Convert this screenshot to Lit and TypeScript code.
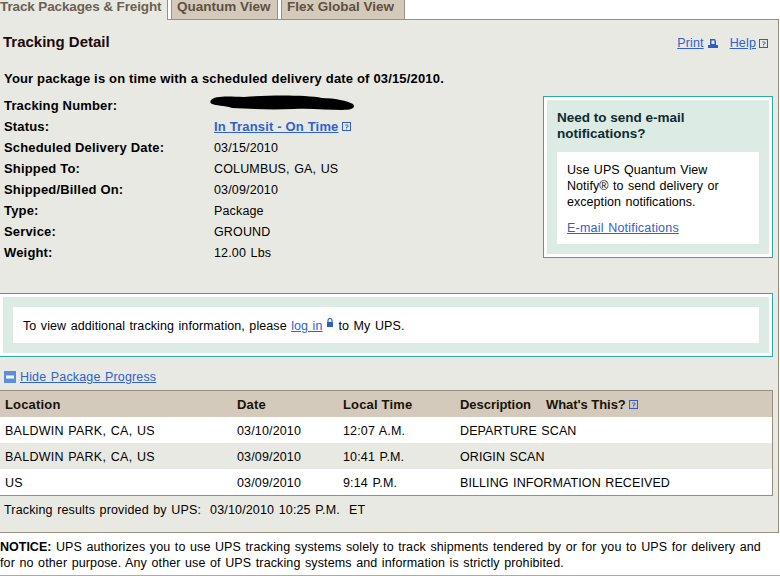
import { LitElement, html, css, svg } from "lit";
import { customElement } from "lit/decorators.js";

const qIcon = html`<svg class="qi" width="9" height="9" viewBox="0 0 9 9"><rect x=".5" y=".5" width="8" height="8" fill="none" stroke="#2f5fc4"/><path d="M3 3h3v2H4.500v1M4.500 6.500v1" fill="none" stroke="#2f5fc4" stroke-width=".8"/></svg>`;
const details: [string, unknown][] = [
  ["Status:", html`<a class="status" href="#">In Transit - On Time</a><span class="after">${qIcon}</span>`],
  ["Scheduled Delivery Date:", "03/15/2010"],
  ["Shipped To:", "COLUMBUS, GA, US"],
  ["Shipped/Billed On:", "03/09/2010"],
  ["Type:", "Package"],
  ["Service:", "GROUND"],
  ["Weight:", "12.00 Lbs"],
];
const rows = [
  ["BALDWIN PARK, CA, US", "03/10/2010", "12:07 A.M.", "DEPARTURE SCAN"],
  ["BALDWIN PARK, CA, US", "03/09/2010", "10:41 P.M.", "ORIGIN SCAN"],
  ["US", "03/09/2010", "9:14 P.M.", "BILLING INFORMATION RECEIVED"],
];

@customElement("app-root")
export class AppRoot extends LitElement {
  static styles = css`
    :host { display: block; width: 780px; height: 576px; overflow: hidden; background: #fff; color: #000;
      font: 12.500px/16px "Liberation Sans", Arial, sans-serif; letter-spacing: .15px; word-spacing: .9px; }
    a { color: #2f62cc; text-decoration: underline; }
    b { font-size: 13px; letter-spacing: .17px; word-spacing: 0; }
    .tabs { display: flex; height: 19px; }
    .tab { box-sizing: border-box; height: 20px; margin-bottom: -1px; font: bold 13.500px/13px "Liberation Sans", Arial, sans-serif; letter-spacing: 0; word-spacing: 0; color: #5f5040; position: relative; white-space: nowrap; }
    .tab.on { width: 168px; background: #e9e9e3; border-right: 1px solid #9a8f7f; color: #6b6054; z-index: 1; letter-spacing: -.12px; }
    .tab.off { background: #d3cabc; border: solid #9a8f7f; border-width: 0 1px 1px 1px; padding-left: 5px; }
    .t2 { width: 107px; margin-left: 3px; }
    .t3 { width: 124px; margin-left: 3px; }
    .panel { box-sizing: border-box; width: 779px; height: 514px; background: #e9e9e3; border: solid #9a8f7f; border-width: 1px 1px 1px 0; display: flex; flex-direction: column; }
    .head { display: flex; justify-content: space-between; padding: 14px 10px 0 3px; height: 32px; box-sizing: border-box; }
    h1 { margin: 0; font: bold 15px/16px "Liberation Sans", Arial, sans-serif; letter-spacing: 0; word-spacing: 0; color: #1d0a0a; }
    .tools { display: flex; align-items: center; height: 16px; margin-top: 1px; }
    .tools a { margin-right: 3px; }
    .tools a.pr { margin-right: 4px; }
    .tools svg { margin-right: 12px; }
    .tools svg:last-child { margin-right: 0; }
    .ontime { font-weight: bold; font-size: 13px; margin: 19px 0 0 4px; letter-spacing: .17px; word-spacing: 0; line-height: 16px; }
    .mid { display: flex; justify-content: space-between; margin-top: -2px; padding-right: 5px; }
    .list { padding-top: 10px; }
    .row { display: flex; height: 21px; align-items: center; }
    .row b { width: 210px; padding-left: 4px; }
    .row span.v { display: flex; align-items: center; }
    .status { font-weight: bold; font-size: 13px; letter-spacing: .17px; word-spacing: 0; }
    .after { margin-left: 3px; display: flex; }
    .scrib { display: block; margin: -5px 0 0 -4px; }
    .promo { box-sizing: border-box; width: 230px; height: 162px; border: 1px solid #2fa9a9; padding: 3px; background: #fff; margin-top: 11px; }
    .promo-in { height: 100%; box-sizing: border-box; background: #dcebe3; padding: 10px 10px 10px; display: flex; flex-direction: column; }
    .promo h2 { margin: 0 0 10px; font: bold 13.500px/16px "Liberation Sans", Arial, sans-serif; letter-spacing: 0; word-spacing: 0; color: #0e2a33; height: 32px; }
    .note { flex: 1; background: #fff; padding: 10px 10px 0; white-space: nowrap; letter-spacing: .05px; }
    .note p { margin: 0 0 10px; }
    .note a { letter-spacing: .2px; }
    .login { box-sizing: border-box; width: 773px; height: 64px; margin-top: 30px; border: solid #2fa9a9; border-width: 1px 1px 1px 0; background: #fff; padding: 3px; }
    .login-in { height: 100%; box-sizing: border-box; background: #dcebe3; padding: 10px; }
    .login-box { box-sizing: border-box; height: 36px; background: #fff; display: flex; align-items: center; padding: 1px 0 0 10px; white-space: pre; letter-spacing: .09px; }
    .login-box svg { margin: 0 5px 6px 3px; }
    .toggle { display: flex; align-items: center; height: 16px; margin: 12px 0 0 4px; gap: 4px; }
    .table { box-sizing: border-box; width: 773px; height: 106px; margin-top: 5px; border: solid #9a8f7f; border-width: 1px 1px 1px 0; background: #fff; }
    .tr { box-sizing: border-box; display: grid; grid-template-columns: 232px 106px 117px 1fr; height: 26px; align-items: center; padding: 1px 0 0 5px; }
    .tr .c0 { letter-spacing: .25px; }
    .tr.th { background: #d3cabc; height: 26px; font-weight: bold; font-size: 13px; letter-spacing: .17px; word-spacing: 0; color: #1a1208; }
    .tr.alt { background: #e9e9e3; }
    .tr .c3 { letter-spacing: .1px; }
    .what { margin-left: 15px; }
    .d { display: flex; align-items: center; letter-spacing: -.05px; }
    .d svg { margin-left: 3px; }
    .foot { margin: 6px 0 0 4px; white-space: pre; }
    .notice { margin: 0; box-sizing: border-box; height: 43px; padding-top: 6px; border-bottom: 1px solid #aaa; white-space: nowrap; letter-spacing: .12px; }
    .notice b { font-size: 12.500px; letter-spacing: 0; }
  `;

  render() {
    const lock = html`<svg width="8" height="9" viewBox="0 0 8 9"><path d="M2 4V2.500a2 2 0 0 1 4 0V4" fill="none" stroke="#2f5fc4" stroke-width="1.200"/><rect x="1" y="4" width="6" height="5" fill="#2f5fc4"/></svg>`;
    const print = html`<svg width="10" height="9" viewBox="0 0 10 9"><path d="M2 0h5l1 2v4h2v3H0V6h2z" fill="#2f5fc4"/><rect x="3.500" y="1.500" width="3" height="3.500" fill="#e9e9e3"/></svg>`;
    const scribble = svg`<path d="M1 5C4 1 16 1 34 2C60 0 96 0 112 3C124 3 138 6 143 9C146 13 142 15 132 15C118 15 100 13 84 14C60 15 40 14 22 13C14 10 6 11 2 9C0 8 0 7 1 5Z" fill="#000"/>`;
    return html`
      <div class="tabs">
        <div class="tab on">Track Packages &amp; Freight</div>
        <div class="tab off t2">Quantum View</div>
        <div class="tab off t3">Flex Global View</div>
      </div>
      <div class="panel">
        <div class="head">
          <h1>Tracking Detail</h1>
          <div class="tools"><a class="pr" href="#">Print</a>${print}<a href="#">Help</a>${qIcon}</div>
        </div>
        <div class="ontime">Your package is on time with a scheduled delivery date of 03/15/2010.</div>
        <div class="mid">
          <div class="list">
            <div class="row"><b>Tracking Number:</b><span class="v"><svg class="scrib" width="146" height="16" viewBox="0 0 146 16">${scribble}</svg></span></div>
            ${details.map(([k, v]) => html`<div class="row"><b>${k}</b><span class="v">${v}</span></div>`)}
          </div>
          <div class="promo"><div class="promo-in">
            <h2>Need to send e-mail notifications?</h2>
            <div class="note">
              <p>Use UPS Quantum View<br>Notify® to send delivery or<br>exception notifications.</p>
              <a href="#">E-mail Notifications</a>
            </div>
          </div></div>
        </div>
        <div class="login"><div class="login-in"><div class="login-box">To view additional tracking information, please <a href="#">log in</a>${lock}to My UPS.</div></div></div>
        <div class="toggle">
          <svg width="12" height="12" viewBox="0 0 12 12"><rect width="12" height="12" fill="#5b8ee0"/><rect x="2" y="4.500" width="8" height="3" fill="#fff"/></svg>
          <a href="#">Hide Package Progress</a>
        </div>
        <div class="table">
          <div class="tr th"><span>Location</span><span>Date</span><span>Local Time</span>
            <span class="d">Description<span class="what">What's This?</span>${qIcon}</span></div>
          ${rows.map((r, i) => html`<div class="tr ${i === 1 ? "alt" : ""}">${r.map((c, j) => html`<span class="c${j}">${c}</span>`)}</div>`)}
        </div>
        <div class="foot">Tracking results provided by UPS:  03/10/2010 10:25 P.M.  ET</div>
      </div>
      <p class="notice"><b>NOTICE:</b> UPS authorizes you to use UPS tracking systems solely to track shipments tendered by or for you to UPS for delivery and<br>for no other purpose. Any other use of UPS tracking systems and information is strictly prohibited.</p>
    `;
  }
}
